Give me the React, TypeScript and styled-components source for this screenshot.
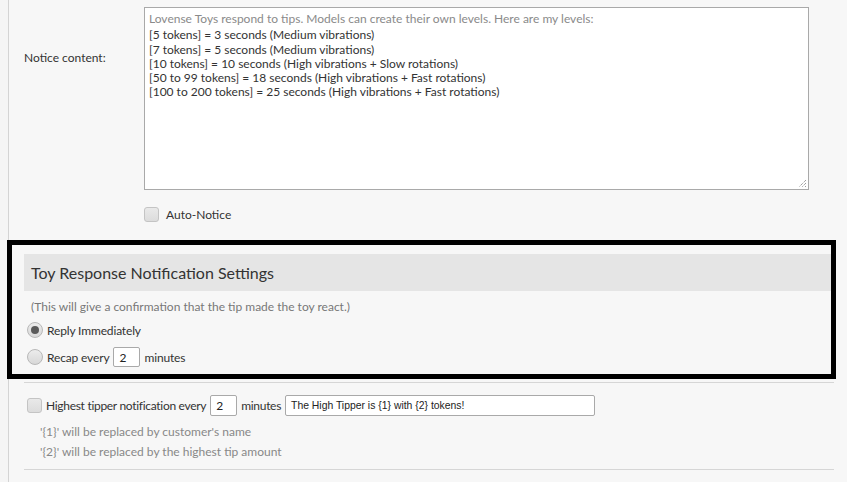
import React from 'react';
import styled, { createGlobalStyle } from 'styled-components';

const GlobalStyle = createGlobalStyle`
  html, body {
    margin: 0;
    padding: 0;
    background: #f5f5f5;
  }

  body {
    font-family: Lato, "Noto Sans", "Liberation Sans", sans-serif;
    font-size: 12px;
    color: #333;
  }
`;

const levels = [
  '[5 tokens] = 3 seconds (Medium vibrations)',
  '[7 tokens] = 5 seconds (Medium vibrations)',
  '[10 tokens] = 10 seconds (High vibrations + Slow rotations)',
  '[50 to 99 tokens] = 18 seconds (High vibrations + Fast rotations)',
  '[100 to 200 tokens] = 25 seconds (High vibrations + Fast rotations)'
];

const Page = styled.div`
  width: 847px;
  height: 482px;
  overflow: hidden;
`;

const Panel = styled.div`
  margin-left: 8px;
  width: 810px;
  min-height: 482px;
  padding: 7px 15px 0 15px;
  background: #f7f7f7;
  border-left: 1px solid #d4d4d4;
  border-right: 1px solid #cccccc;
`;

const FieldRow = styled.div`
  display: flex;
  align-items: flex-start;
`;

const FieldLabel = styled.div`
  width: 120px;
  flex: none;
  padding-top: 44px;
  line-height: 14px;
  color: #333;
`;

const TextBox = styled.div`
  position: relative;
  box-sizing: border-box;
  width: 665px;
  height: 183px;
  padding: 4px 4px;
  background: #fff;
  border: 1px solid #a9a9a9;
  line-height: 14.3px;
  color: #333;
`;

const Intro = styled.div`
  color: #8a8a8a;
  margin-bottom: 2px;
`;

const Grip = styled.svg`
  position: absolute;
  right: 1px;
  bottom: 1px;
`;

const CheckRow = styled.label`
  display: flex;
  align-items: center;
  gap: 7px;
  color: #333;
`;

const CheckBox = styled.span`
  box-sizing: border-box;
  width: 15px;
  height: 15px;
  flex: none;
  border: 1px solid #c4c4c4;
  border-radius: 3px;
  background: linear-gradient(#e9e9e9, #dcdcdc);
`;

const AutoRow = styled.div`
  margin: 17px 0 0 120px;
  height: 15px;
`;

const Highlight = styled.section`
  box-sizing: border-box;
  margin: 18px -2px 0 -17px;
  height: 139px;
  padding: 9px 0 0 12px;
  border: 5px solid #000;
  background: #f7f7f7;
`;

const SectionHead = styled.div`
  height: 37px;
  display: flex;
  align-items: center;
  padding-left: 7px;
  background: #e5e5e5;
  font-size: 16px;
  color: #333;
`;

const Note = styled.div`
  margin: 10px 0 0 7px;
  line-height: 12px;
  color: #777;
`;

const RadioRow = styled.div<{ $top: number }>`
  display: flex;
  align-items: center;
  gap: 4px;
  height: 20px;
  margin: ${p => p.$top}px 0 0 3px;
  color: #333;
  letter-spacing: -0.15px;
`;

const Radio = styled.span<{ $checked?: boolean }>`
  position: relative;
  box-sizing: border-box;
  width: 16px;
  height: 16px;
  flex: none;
  border: 1px solid #b8b8b8;
  border-radius: 50%;
  background: linear-gradient(#ececec, #d8d8d8);

  &::after {
    content: '';
    display: ${p => (p.$checked ? 'block' : 'none')};
    position: absolute;
    left: 3px;
    top: 3px;
    width: 8px;
    height: 8px;
    border-radius: 50%;
    background: #5a5a5a;
  }
`;

const SmallInput = styled.span<{ $h?: number }>`
  box-sizing: border-box;
  width: 27px;
  height: ${p => p.$h ?? 20}px;
  flex: none;
  padding-left: 5px;
  display: flex;
  align-items: center;
  background: #fff;
  border: 1px solid #a9a9a9;
  border-radius: 2px;
  color: #222;
  letter-spacing: 0;
`;

const WideInput = styled.span`
  box-sizing: border-box;
  width: 310px;
  height: 21px;
  padding-left: 5px;
  display: flex;
  align-items: center;
  background: #fff;
  border: 1px solid #a9a9a9;
  border-radius: 2px;
  font-family: "Liberation Sans", Arial, sans-serif;
  font-size: 10.4px;
  color: #222;
  letter-spacing: 0;
`;

const Divider = styled.div<{ $top: number }>`
  margin-top: ${p => p.$top}px;
  height: 1px;
  background: #d6d6d6;
`;

const TipperRow = styled.div`
  display: flex;
  align-items: center;
  gap: 4px;
  height: 21px;
  margin: 12px 0 0 3px;
  letter-spacing: -0.3px;
`;

const Hint = styled.div<{ $top: number }>`
  margin: ${p => p.$top}px 0 0 16px;
  line-height: 14px;
  color: #888;
`;

const App = () => {
  return (
    <Page>
      <GlobalStyle />
      <Panel>
        <FieldRow>
          <FieldLabel>Notice content:</FieldLabel>
          <TextBox>
            <Intro>Lovense Toys respond to tips. Models can create their own levels. Here are my levels:</Intro>
            {levels.map(line => (
              <div key={line}>{line}</div>
            ))}
            <Grip width='9' height='9' viewBox='0 0 9 9'>
              <path d='M8 1 L1 8 M8 4 L4 8 M8 7 L7 8' stroke='#777' strokeWidth='1' strokeDasharray='1 1' />
            </Grip>
          </TextBox>
        </FieldRow>
        <AutoRow>
          <CheckRow>
            <CheckBox />
            Auto-Notice
          </CheckRow>
        </AutoRow>
        <Highlight>
          <SectionHead>Toy Response Notification Settings</SectionHead>
          <Note>(This will give a confirmation that the tip made the toy react.)</Note>
          <RadioRow $top={7}>
            <Radio $checked />
            Reply Immediately
          </RadioRow>
          <RadioRow $top={7}>
            <Radio />
            <span>Recap every</span>
            <SmallInput>2</SmallInput>
            <span>minutes</span>
          </RadioRow>
        </Highlight>
        <Divider $top={3} />
        <TipperRow>
          <CheckBox />
          <span>Highest tipper notification every</span>
          <SmallInput $h={21}>2</SmallInput>
          <span>minutes</span>
          <WideInput>The High Tipper is {'{1}'} with {'{2}'} tokens!</WideInput>
        </TipperRow>
        <Hint $top={9}>'{'{1}'}' will be replaced by customer's name</Hint>
        <Hint $top={6}>'{'{2}'}' will be replaced by the highest tip amount</Hint>
        <Divider $top={10} />
      </Panel>
    </Page>
  );
};

export default App;
